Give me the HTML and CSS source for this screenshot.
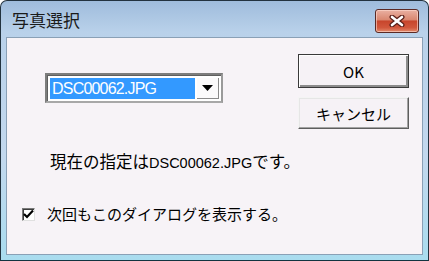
FILE: index.html
```html
<!DOCTYPE html>
<html lang="ja">
<head>
    <meta charset="UTF-8">
    <title>写真選択</title>
    <link rel="stylesheet" href="styles.css">
</head>
<body>
    <div class="window">
        <div class="titlebar">
            <span class="title">写真選択</span>
            <button class="close" aria-label="閉じる">
                <svg width="16" height="12" viewBox="0 0 16 12">
                    <path d="M3 2 L13 10 M13 2 L3 10" stroke="#5a1f18" stroke-width="5" stroke-linecap="round"/>
                    <path d="M3 2 L13 10 M13 2 L3 10" stroke="#ffffff" stroke-width="2.6" stroke-linecap="round"/>
                </svg>
            </button>
        </div>
        <div class="client">
            <div class="top-row">
                <div class="combo">
                    <span class="combo-value">DSC00062.JPG</span>
                    <span class="combo-arrow">
                        <svg width="11" height="6" viewBox="0 0 11 6"><path d="M0 0 H11 L5.5 6 Z" fill="#000"/></svg>
                    </span>
                </div>
                <div class="actions">
                    <button class="btn btn-default">OK</button>
                    <button class="btn">キャンセル</button>
                </div>
            </div>
            <p class="message">現在の指定は<span class="fname">DSC00062.JPG</span>です。</p>
            <label class="check">
                <span class="checkbox">
                    <svg width="11" height="10" viewBox="0 0 11 10"><path d="M1 5 L4 8 L10 1.5" stroke="#000" stroke-width="2.2" fill="none"/></svg>
                </span>
                次回もこのダイアログを表示する。
            </label>
        </div>
    </div>
</body>
</html>
```

FILE: styles.css
```css
body {
    margin: 0;
    font-family: "Noto Sans CJK JP", "Liberation Sans", sans-serif;
    color: #000;
}
.window {
    width: 429px;
    height: 261px;
    box-sizing: border-box;
    border: 1px solid #22323f;
    border-bottom-color: #123440;
    border-radius: 7px 7px 0 0;
    background: linear-gradient(#9fbcdc, #b9d1ea 12%, #c3d8ee 60%, #a9dcef);
    padding: 0 5px 5px 5px;
    display: flex;
    flex-direction: column;
}
.titlebar {
    height: 36px;
    display: flex;
    align-items: flex-start;
    justify-content: space-between;
    padding-left: 6px;
    padding-right: 4px;
}
.title {
    font-size: 17px;
    line-height: 20px;
    margin-top: 9px;
    color: #1a1a1a;
}
.close {
    width: 44px;
    height: 24px;
    margin-top: 8px;
    padding: 0;
    border: 1px solid #5b2a25;
    border-radius: 3px;
    background: linear-gradient(#eab0a2, #d9866f 45%, #c7452c 50%, #d1573c 80%, #e38b6c);
    box-shadow: inset 0 0 0 1px rgba(255, 220, 210, 0.6);
    display: flex;
    align-items: center;
    justify-content: center;
}
.client {
    flex: 1;
    background: #f7f3f7;
    border: 1px solid #8aa0b6;
}
.top-row {
    display: flex;
    padding-top: 16px;
}
.combo {
    width: 178px;
    height: 30px;
    box-sizing: border-box;
    margin-top: 19px;
    margin-left: 38px;
    border: 2px solid #7d7d7d;
    border-right-color: #9a9a9a;
    border-bottom-color: #a8a8a8;
    box-shadow: inset 1px 1px 0 #5f5f5f;
    background: #fff;
    display: flex;
    padding: 3px 2px 2px 3px;
}
.combo-value {
    flex: 1;
    background: #3399ff;
    color: #fff;
    font-family: "Liberation Sans", sans-serif;
    font-size: 16px;
    letter-spacing: -0.8px;
    line-height: 21px;
    padding-left: 2px;
}
.combo-arrow {
    width: 21px;
    margin-left: 2px;
    background: #fbfafb;
    border-right: 1px solid #8a8a8a;
    border-bottom: 1px solid #8a8a8a;
    display: flex;
    align-items: center;
    justify-content: center;
}
.actions {
    margin-left: auto;
    margin-right: 13px;
    display: flex;
    flex-direction: column;
    gap: 9px;
}
.btn {
    width: 111px;
    height: 32px;
    padding: 0;
    font-family: "Noto Sans CJK JP", sans-serif;
    font-size: 15px;
    color: #000;
    background: #f6f2f6;
    border: 1px solid;
    border-color: #f4f4f4 #5e5e5e #5e5e5e #f4f4f4;
    box-shadow: inset -1px -1px 0 #a3a3a3, inset 1px 1px 0 #e6e6e6;
}
.btn-default {
    height: 34px;
    border: 1px solid #3a3a3a;
    box-shadow: inset 1px 1px 0 #ffffff, inset -2px -2px 0 #8c8c8c;
}
.message {
    margin: 22px 0 0 43px;
    font-size: 16.5px;
    line-height: 20px;
}
.fname {
    font-family: "Liberation Sans", sans-serif;
    font-size: 14.5px;
}
.check {
    display: flex;
    align-items: center;
    margin: 31px 0 0 15px;
    font-size: 15px;
    line-height: 20px;
}
.checkbox {
    width: 13px;
    height: 13px;
    box-sizing: border-box;
    margin-right: 12px;
    background: #fff;
    border: 1px solid;
    border-color: #7a7a7a #e0e0e0 #e0e0e0 #7a7a7a;
    box-shadow: inset 1px 1px 0 #3f3f3f;
    display: flex;
    align-items: center;
    justify-content: center;
}
```
